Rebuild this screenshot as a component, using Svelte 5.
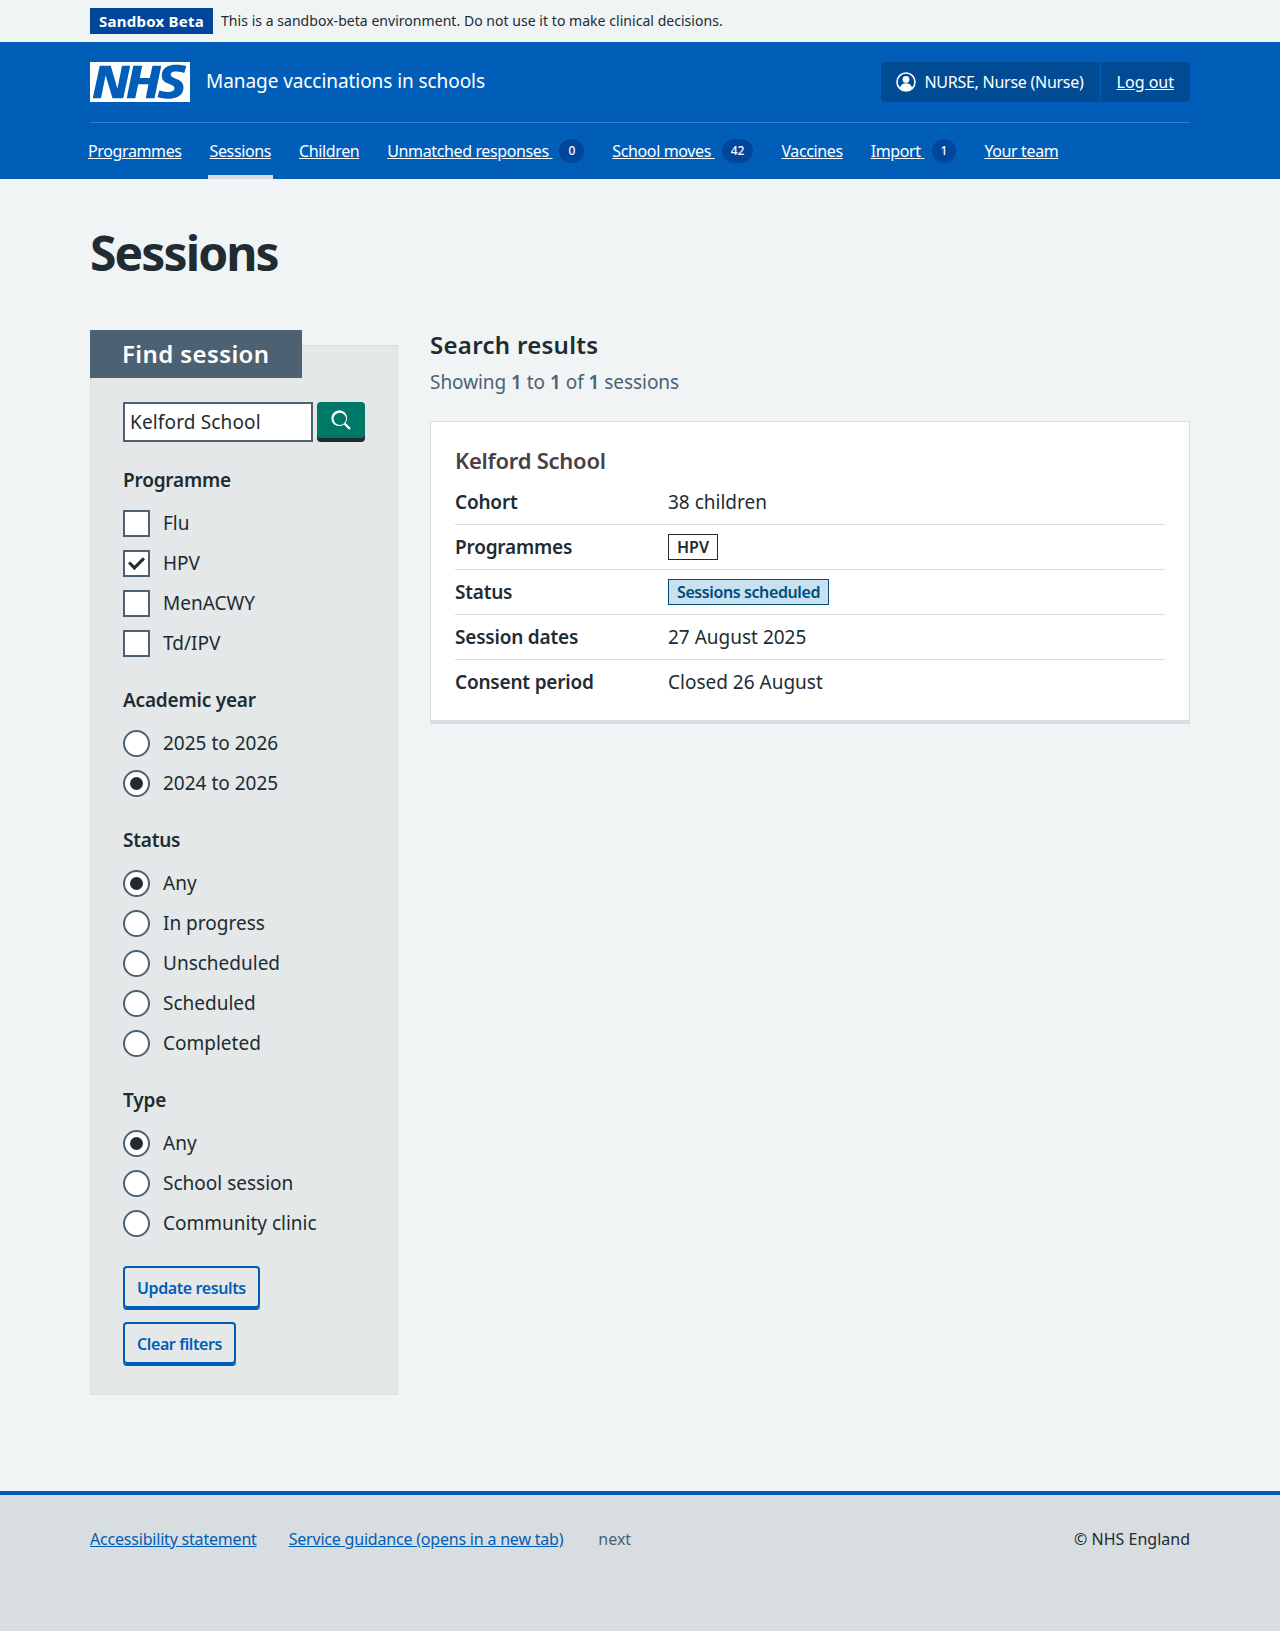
<script>
	const nav = [
		{ label: 'Programmes' },
		{ label: 'Sessions', active: true },
		{ label: 'Children' },
		{ label: 'Unmatched responses', count: 0 },
		{ label: 'School moves', count: 42 },
		{ label: 'Vaccines' },
		{ label: 'Import', count: 1 },
		{ label: 'Your team' }
	];

	const programmes = [
		{ label: 'Flu' },
		{ label: 'HPV', checked: true },
		{ label: 'MenACWY' },
		{ label: 'Td/IPV' }
	];

	const groups = [
		{
			name: 'Academic year',
			options: [{ label: '2025 to 2026' }, { label: '2024 to 2025', checked: true }]
		},
		{
			name: 'Status',
			options: [
				{ label: 'Any', checked: true },
				{ label: 'In progress' },
				{ label: 'Unscheduled' },
				{ label: 'Scheduled' },
				{ label: 'Completed' }
			]
		},
		{
			name: 'Type',
			options: [
				{ label: 'Any', checked: true },
				{ label: 'School session' },
				{ label: 'Community clinic' }
			]
		}
	];
</script>

<div class="beta">
	<div class="wrap beta-row">
		<strong class="beta-tag">Sandbox Beta</strong>
		<span>This is a sandbox-beta environment. Do not use it to make clinical decisions.</span>
	</div>
</div>

<header>
	<div class="wrap">
		<div class="head-row">
			<svg class="logo" viewBox="0 0 40 16" aria-label="NHS">
				<path fill="#fff" d="M0 0h40v16H0z" />
				<path
					fill="#005eb8"
					d="M3.9 1.5h4.4l2.6 9h.1l1.8-9h3.3l-2.8 13H9l-2.7-9h-.1l-1.8 9H1.1M17.3 1.5h3.6l-1 4.9h4L25 1.5h3.5l-2.7 13h-3.5l1.1-5.6h-4.1l-1.2 5.6h-3.4M37.7 4.4c-.7-.3-1.6-.6-2.9-.6-1.4 0-2.5.2-2.5 1.3 0 1.8 5.1 1.2 5.1 5.1 0 3.6-3.3 4.5-6.4 4.5-1.3 0-2.9-.3-4-.7l.8-2.7c.7.4 2.1.7 3.2.7s2.8-.2 2.8-1.5c0-2.1-5.1-1.3-5.1-5 0-3.4 2.9-4.4 5.8-4.4 1.6 0 3.1.2 4 .6"
				/>
			</svg>
			<span class="service">Manage vaccinations in schools</span>
			<div class="account">
				<span class="who">
					<svg viewBox="0 0 20 20" width="20" height="20">
						<circle cx="10" cy="10" r="9" fill="none" stroke="#fff" stroke-width="1.6" />
						<circle cx="10" cy="7.4" r="3.4" fill="#fff" />
						<path fill="#fff" d="M3.9 16c.5-3.2 2.8-4.8 6.1-4.8s5.600 1.600 6.100 4.800A9 9 0 0 1 10 19a9 9 0 0 1-6.100-3z" />
					</svg>
					NURSE, Nurse (Nurse)
				</span>
				<a href="#out">Log out</a>
			</div>
		</div>
		<nav>
			{#each nav as item}
				<a href="#nav" class:active={item.active}>
					<span class="nav-text">{item.label}{#if item.count !== undefined}&nbsp;{/if}</span>
					{#if item.count !== undefined}
						<span class="count">{item.count}</span>
					{/if}
				</a>
			{/each}
		</nav>
	</div>
</header>

<main class="wrap">
	<h1>Sessions</h1>
	<div class="columns">
		<form class="filters">
			<h2 class="legend">Find session</h2>
			<div class="search">
				<input type="text" value="Kelford School" />
				<button type="button" aria-label="Search">
					<svg viewBox="0 0 24 24" width="27" height="27">
						<path
							fill="#fff"
							d="M19.710 18.290l-4.110-4.110a7 7 0 1 0-1.420 1.420l4.110 4.110a1 1 0 0 0 1.420 0 1 1 0 0 0 0-1.420zM5 10.500a5.500 5.500 0 1 1 5.500 5.500A5.500 5.500 0 0 1 5 10.500z"
						/>
					</svg>
				</button>
			</div>

			<fieldset>
				<legend>Programme</legend>
				{#each programmes as option}
					<label class="option">
						<input type="checkbox" checked={option.checked} />
						<span>{option.label}</span>
					</label>
				{/each}
			</fieldset>

			{#each groups as group}
				<fieldset>
					<legend>{group.name}</legend>
					{#each group.options as option}
						<label class="option">
							<input type="radio" name={group.name} checked={option.checked} />
							<span>{option.label}</span>
						</label>
					{/each}
				</fieldset>
			{/each}

			<div class="actions">
				<button type="button" class="secondary">Update results</button>
				<button type="button" class="secondary">Clear filters</button>
			</div>
		</form>

		<section class="results">
			<h2>Search results</h2>
			<p class="showing">Showing <b>1</b> to <b>1</b> of <b>1</b> sessions</p>
			<article class="card">
				<h3>Kelford School</h3>
				<dl>
					<div><dt>Cohort</dt><dd>38 children</dd></div>
					<div><dt>Programmes</dt><dd><strong class="tag">HPV</strong></dd></div>
					<div><dt>Status</dt><dd><strong class="tag blue">Sessions scheduled</strong></dd></div>
					<div><dt>Session dates</dt><dd>27 August 2025</dd></div>
					<div><dt>Consent period</dt><dd>Closed 26 August</dd></div>
				</dl>
			</article>
		</section>
	</div>
</main>

<footer>
	<div class="wrap foot-row">
		<a href="#a11y">Accessibility statement</a>
		<a href="#guide">Service guidance (opens in a new tab)</a>
		<span class="version">next</span>
		<span class="copy">© NHS England</span>
	</div>
</footer>

<style>
	:global(body) {
		background: #f0f4f5;
		color: #212b32;
		font-family: 'Noto Sans', 'Open Sans', sans-serif;
		font-size: 19px;
		line-height: 28px;
	}

	.wrap {
		width: 1100px;
		margin: 0 auto;
	}

	.beta {
		height: 42px;
		font-size: 14px;
		letter-spacing: 0.04px;
	}

	.beta-row {
		display: flex;
		align-items: center;
		gap: 8px;
		height: 42px;
	}

	.beta-tag {
		background: #00479c;
		color: #fff;
		padding: 0 9px;
		height: 26px;
		line-height: 26px;
		font-size: 15px;
		font-weight: 700;
		letter-spacing: 0.25px;
	}

	header {
		background: #005eb8;
		color: #fff;
		height: 137px;
	}

	.head-row {
		display: flex;
		align-items: center;
		height: 80px;
		border-bottom: 1px solid #337ec6;
	}

	.logo {
		width: 100px;
		height: 40px;
		margin-right: 16px;
	}

	.service {
		font-size: 19px;
		letter-spacing: -0.07px;
		margin-top: -2px;
	}

	.account {
		margin-left: auto;
		display: flex;
		height: 40px;
		background: #004b93;
		border-radius: 4px;
		font-size: 16px;
		line-height: 40px;
	}

	.who {
		display: flex;
		align-items: center;
		gap: 8px;
		padding: 0 16px 0 15px;
		border-right: 1px solid #005eb8;
		letter-spacing: -0.26px;
	}

	.account a {
		color: #fff;
		padding: 0 16px;
	}

	nav {
		display: flex;
		gap: 24px;
		margin-left: -4px;
		font-size: 16px;
		letter-spacing: -0.38px;
	}

	nav a {
		display: flex;
		align-items: center;
		height: 56px;
		padding: 4px 2px 0;
		color: #fff;
		box-sizing: border-box;
		border-bottom: 4px solid transparent;
		text-decoration: none;
	}

	nav a.active {
		border-bottom-color: #d8dde0;
	}

	.nav-text {
		text-decoration: underline;
	}

	.count {
		margin-left: 7px;
		min-width: 24px;
		height: 24px;
		padding: 0 9px;
		box-sizing: border-box;
		border-radius: 12px;
		background: #00479c;
		font-size: 12px;
		font-weight: 500;
		line-height: 24px;
		text-align: center;
		letter-spacing: 0;
	}

	h1 {
		margin: 0;
		padding-top: 46px;
		font-size: 48px;
		line-height: 56px;
		font-weight: 700;
		letter-spacing: -1.9px;
	}

	.columns {
		display: flex;
		align-items: flex-start;
		gap: 32px;
		margin-top: 49px;
	}

	.filters {
		width: 308px;
		box-sizing: border-box;
		margin-top: 15px;
		padding: 0 32px 30px;
		background: #e4e8e8;
		border: 1px solid #d8dde0;
	}

	.legend {
		width: 212px;
		height: 48px;
		margin: -16px 0 24px -33px;
		padding-left: 32px;
		box-sizing: border-box;
		background: #4c6272;
		color: #fff;
		font-size: 24px;
		font-weight: 600;
		line-height: 47px;
		letter-spacing: 0.4px;
	}

	.search {
		display: flex;
		gap: 4px;
	}

	.search input {
		width: 190px;
		height: 40px;
		box-sizing: border-box;
		padding: 0 5px;
		border: 2px solid #4c6272;
		border-radius: 0;
		background: #fff;
		color: #212b32;
		font: inherit;
		letter-spacing: 0.15px;
	}

	.search button {
		display: flex;
		align-items: center;
		justify-content: center;
		width: 48px;
		height: 36px;
		padding: 0;
		border: 0;
		border-radius: 4px;
		background: #007868;
		box-shadow: 0 4px 0 #212b32;
	}

	fieldset {
		margin: 24px 0 0;
		padding: 0;
		border: 0;
	}

	fieldset + fieldset {
		margin-top: 29px;
	}

	legend {
		padding: 0;
		margin-bottom: 15px;
		font-weight: 600;
		letter-spacing: -0.2px;
	}

	.option {
		display: flex;
		align-items: center;
		gap: 13px;
		height: 28px;
		margin-bottom: 12px;
	}

	.option:last-child {
		margin-bottom: 0;
	}

	.option input {
		appearance: none;
		width: 27px;
		height: 27px;
		margin: 0;
		box-sizing: border-box;
		border: 2px solid #4c6272;
		background: #fff;
		display: grid;
		place-items: center;
	}

	.option input[type='radio'] {
		border-radius: 50%;
	}

	.option input[type='radio']:checked::after {
		content: '';
		width: 13px;
		height: 13px;
		border-radius: 50%;
		background: #212b32;
	}

	.option input[type='checkbox']:checked::after {
		content: '';
		width: 12px;
		height: 6px;
		margin-top: -4px;
		border: solid #212b32;
		border-width: 0 0 3px 3px;
		transform: rotate(-45deg);
	}

	.actions {
		display: flex;
		flex-direction: column;
		align-items: flex-start;
		gap: 14px;
		margin-top: 29px;
	}

	.secondary {
		height: 37px;
		padding: 1px 12px 0;
		box-sizing: content-box;
		border: 2px solid #005eb8;
		border-radius: 4px;
		background: transparent;
		box-shadow: 0 2px 0 #005eb8;
		color: #005eb8;
		font: 600 16px/24px 'Noto Sans', sans-serif;
		letter-spacing: -0.4px;
	}

	.results {
		flex: 1;
	}

	.results h2 {
		margin: -1px 0 0;
		font-size: 24px;
		line-height: 32px;
		font-weight: 600;
		letter-spacing: 0.3px;
	}

	.showing {
		margin: 7px 0 25px;
		color: #4c6272;
		letter-spacing: -0.05px;
	}

	.showing b {
		font-weight: 600;
	}

	.card {
		padding: 22px 24px 15px;
		background: #fff;
		border: 1px solid #d8dde0;
		border-bottom-width: 4px;
	}

	h3 {
		margin: 0 0 4px;
		color: #4b3f45;
		font-size: 22px;
		line-height: 32px;
		font-weight: 600;
		letter-spacing: -0.25px;
	}

	dl {
		margin: 0;
	}

	dl div {
		display: flex;
		height: 45px;
		padding-top: 8px;
		box-sizing: border-box;
		border-bottom: 1px solid #d8dde0;
	}

	dl div:last-child {
		border-bottom: 0;
	}

	dt {
		width: 213px;
		font-weight: 600;
		letter-spacing: -0.2px;
	}

	dd {
		margin: 0;
	}

	.tag {
		display: inline-block;
		height: 26px;
		padding: 0 8px;
		box-sizing: border-box;
		border: 1px solid #212b32;
		font-size: 16px;
		font-weight: 600;
		line-height: 24px;
		vertical-align: top;
		margin-top: 1px;
	}

	.tag.blue {
		background: #c7e1f0;
		border-color: #004b7c;
		color: #004b7c;
		letter-spacing: -0.4px;
	}

	footer {
		margin-top: 96px;
		height: 140px;
		box-sizing: border-box;
		background: #d8dde0;
		border-top: 4px solid #005eb8;
		font-size: 16px;
	}

	.foot-row {
		display: flex;
		align-items: center;
		gap: 32px;
		padding-top: 30px;
	}

	.foot-row a {
		color: #005eb8;
		letter-spacing: -0.2px;
	}

	.version {
		margin-left: 3px;
		color: #4c6272;
	}

	.copy {
		margin-left: auto;
	}
</style>
